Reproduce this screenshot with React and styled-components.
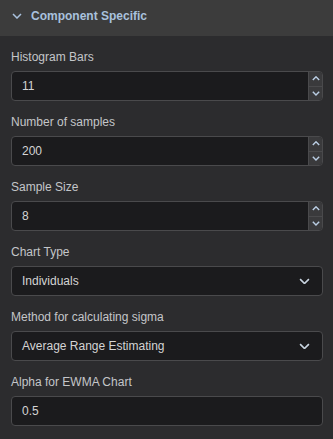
import React from 'react';
import styled, { createGlobalStyle } from 'styled-components';

const Global = createGlobalStyle`
  html, body {
    margin: 0;
    padding: 0;
    background: #2c2c2e;
    font-family: "Liberation Sans", Arial, sans-serif;
  }
`;

const Panel = styled.div`
  width: 333px;
  min-height: 439px;
  background: #2c2c2e;
`;

const Header = styled.div`
  display: flex;
  align-items: center;
  gap: 9px;
  height: 36px;
  box-sizing: border-box;
  padding: 0 0 5px 12px;
  background: #3c3c3c;
  color: #a9c1dd;
  font-size: 12px;
  font-weight: bold;
`;

const Body = styled.div`
  display: flex;
  flex-direction: column;
  gap: 14px;
  padding: 14px 10px 0 11px;
`;

const Field = styled.div`
  display: flex;
  flex-direction: column;
  gap: 7px;
`;

const Label = styled.div`
  height: 14px;
  line-height: 14px;
  font-size: 12px;
  color: #c4c6c9;
`;

const Box = styled.div`
  display: flex;
  align-items: center;
  height: 30px;
  box-sizing: border-box;
  border: 1px solid #4a4a4c;
  border-radius: 4px;
  background: #1b1b1d;
  overflow: hidden;
`;

const Value = styled.div`
  flex: 1;
  padding-left: 10px;
  font-size: 12px;
  color: #d4d4d4;
`;

const Spinner = styled.div`
  display: flex;
  flex-direction: column;
  align-self: stretch;
  width: 13px;
  border-left: 1px solid #4a4a4c;
  background: #3a3a3c;
`;

const SpinHalf = styled.div`
  flex: 1;
  display: flex;
  align-items: center;
  justify-content: center;
  & + & {
    border-top: 1px solid #4a4a4c;
  }
`;

const Caret = styled.div`
  display: flex;
  align-items: center;
  padding-right: 12px;
`;

const Chevron = ({ up, size = 10, color = '#a9c1dd', width = 1.6 }) => (
  <svg width={size} height={size * 0.6} viewBox="0 0 10 6">
    <polyline
      points={up ? '1,5 5,1 9,5' : '1,1 5,5 9,1'}
      fill="none"
      stroke={color}
      strokeWidth={width}
    />
  </svg>
);

const NumberInput = ({ value }) => (
  <Box>
    <Value>{value}</Value>
    <Spinner>
      <SpinHalf><Chevron up size={8} color="#b9cde3" width={1.8} /></SpinHalf>
      <SpinHalf><Chevron size={8} color="#b9cde3" width={1.8} /></SpinHalf>
    </Spinner>
  </Box>
);

const Select = ({ value }) => (
  <Box>
    <Value>{value}</Value>
    <Caret><Chevron size={11} color="#c8d4e0" width={1.5} /></Caret>
  </Box>
);

const TextInput = ({ value }) => (
  <Box>
    <Value>{value}</Value>
  </Box>
);

export default function App() {
  return (
    <Panel>
      <Global />
      <Header>
        <Chevron size={10} color="#a9c1dd" width={1.5} />
        Component Specific
      </Header>
      <Body>
        <Field>
          <Label>Histogram Bars</Label>
          <NumberInput value="11" />
        </Field>
        <Field>
          <Label>Number of samples</Label>
          <NumberInput value="200" />
        </Field>
        <Field>
          <Label>Sample Size</Label>
          <NumberInput value="8" />
        </Field>
        <Field>
          <Label>Chart Type</Label>
          <Select value="Individuals" />
        </Field>
        <Field>
          <Label>Method for calculating sigma</Label>
          <Select value="Average Range Estimating" />
        </Field>
        <Field>
          <Label>Alpha for EWMA Chart</Label>
          <TextInput value="0.5" />
        </Field>
      </Body>
    </Panel>
  );
}
